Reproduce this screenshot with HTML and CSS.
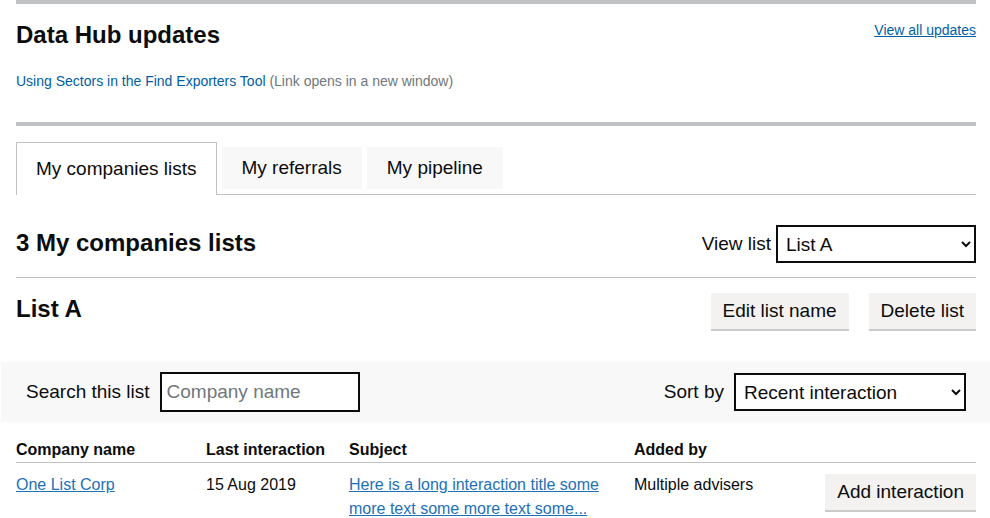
FILE: index.html
```html
<!DOCTYPE html>
<html lang="en">
<head>
<meta charset="utf-8">
<title>Data Hub</title>
<link rel="stylesheet" href="styles.css">
</head>
<body>
<div class="page">
  <section class="updates">
    <div class="updates-head">
      <h2 class="updates-title">Data Hub updates</h2>
      <a class="updates-all" href="#">View all updates</a>
    </div>
    <p class="update-item"><a href="#">Using Sectors in the Find Exporters Tool</a> (Link opens in a new window)</p>
  </section>

  <ul class="tabs">
    <li class="tab tab-selected">My companies lists</li>
    <li class="tab">My referrals</li>
    <li class="tab">My pipeline</li>
  </ul>

  <div class="lists-head">
    <h2 class="lists-title">3 My companies lists</h2>
    <label class="view-list">View list
      <select class="select select-list"><option>List A</option></select>
    </label>
  </div>

  <div class="list-head">
    <h3 class="list-title">List A</h3>
    <div class="list-actions">
      <button class="btn">Edit list name</button>
      <button class="btn">Delete list</button>
    </div>
  </div>

  <div class="filters">
    <label class="filter">Search this list
      <input class="input" type="text" placeholder="Company name">
    </label>
    <label class="filter">Sort by
      <select class="select select-sort"><option>Recent interaction</option></select>
    </label>
  </div>

  <table class="companies">
    <colgroup>
      <col class="c1"><col class="c2"><col class="c3"><col class="c4"><col class="c5">
    </colgroup>
    <thead>
      <tr>
        <th>Company name</th>
        <th>Last interaction</th>
        <th>Subject</th>
        <th>Added by</th>
        <th></th>
      </tr>
    </thead>
    <tbody>
      <tr>
        <td><a href="#">One List Corp</a></td>
        <td>15 Aug 2019</td>
        <td><a href="#">Here is a long interaction title some more text some more text some...</a></td>
        <td>Multiple advisers</td>
        <td class="cell-action"><button class="btn btn-row">Add interaction</button></td>
      </tr>
    </tbody>
  </table>
</div>
</body>
</html>
```

FILE: styles.css
```css
* { box-sizing: border-box; }
html, body { margin: 0; padding: 0; background: #fff; }
body {
  font-family: "Liberation Sans", Arial, sans-serif;
  color: #0b0c0c;
  overflow: hidden;
}
.page { padding: 0 14px 0 16px; width: 990px; }

.updates {
  border-top: 4px solid #bfc1c3;
  border-bottom: 4px solid #bfc1c3;
  padding: 16px 0 31px;
}
.updates-head {
  display: flex;
  justify-content: space-between;
  align-items: flex-start;
}
.updates-title {
  margin: 0;
  font-size: 24px;
  line-height: 30px;
  font-weight: 700;
}
.updates-all {
  margin-top: 0;
  font-size: 14px;
  line-height: 20px;
  color: #005ea5;
}
.update-item {
  margin: 21px 0 0;
  font-size: 14px;
  line-height: 20px;
  color: #6f777b;
}
.update-item a { color: #005ea5; text-decoration: none; }

.tabs {
  list-style: none;
  margin: 16px 0 0;
  padding: 0;
  display: flex;
  align-items: flex-end;
  gap: 5px;
  border-bottom: 1px solid #bfc1c3;
}
.tab {
  font-size: 19px;
  line-height: 22px;
  padding: 10px 20px;
  background: #f8f8f8;
  margin-bottom: 5px;
}
.tab-selected {
  background: #fff;
  border: 1px solid #bfc1c3;
  border-bottom: 0;
  padding: 15px 19px 15px 19px;
  margin-bottom: -1px;
}

.lists-head {
  display: flex;
  justify-content: space-between;
  align-items: center;
  margin-top: 30px;
  padding-bottom: 14px;
  border-bottom: 1px solid #bfc1c3;
}
.lists-title, .list-title {
  margin: 0;
  font-size: 24px;
  line-height: 30px;
  font-weight: 700;
}
.lists-title { margin-top: -2px; }
.view-list {
  display: flex;
  align-items: center;
  gap: 5px;
  font-size: 19px;
}
.select {
  font-family: "Liberation Sans", Arial, sans-serif;
  font-size: 19px;
  color: #0b0c0c;
  height: 38px;
  border: 2px solid #0b0c0c;
  border-radius: 0;
  background: #fff;
  padding: 0 4px;
}
.select-list { width: 200px; }
.select-sort { width: 232px; height: 38px; }

.list-head {
  display: flex;
  justify-content: space-between;
  align-items: center;
  padding-top: 15px;
}
.list-title { margin-top: -6px; }
.list-actions { display: flex; gap: 20px; }
.btn {
  font-family: "Liberation Sans", Arial, sans-serif;
  font-size: 19px;
  line-height: 22px;
  color: #0b0c0c;
  background: #f3f2f1;
  border: 0;
  border-radius: 0;
  padding: 7px 12px;
  box-shadow: 0 2px 0 #cbcac9;
  margin-bottom: 2px;
}

.filters {
  margin: 31px -14px 0 -15px;
  background: #f8f8f8;
  padding: 10px 24px 10px 25px;
  display: flex;
  justify-content: space-between;
  align-items: center;
}
.filter {
  display: flex;
  align-items: center;
  gap: 10px;
  font-size: 19px;
}
.input {
  font-family: "Liberation Sans", Arial, sans-serif;
  font-size: 19px;
  width: 200px;
  height: 40px;
  border: 2px solid #0b0c0c;
  border-radius: 0;
  padding: 0 5px;
  color: #0b0c0c;
}
.input::placeholder { color: #6f777b; }

.companies {
  width: 960px;
  margin-top: 14px;
  border-collapse: collapse;
  table-layout: fixed;
  font-size: 16px;
}
.c1 { width: 190px; }
.c2 { width: 143px; }
.c3 { width: 285px; }
.c4 { width: 190px; }
.c5 { width: 152px; }
.companies th {
  text-align: left;
  font-weight: 700;
  line-height: 20px;
  padding: 4px 20px 2px 0;
  border-bottom: 1px solid #bfc1c3;
}
.companies td {
  vertical-align: top;
  line-height: 24px;
  padding: 10px 20px 9px 0;
}
.companies a { color: #1d70b8; }
.companies td.cell-action { padding: 11px 0 0; text-align: right; }
.btn-row { padding: 7px 12px; }
```
